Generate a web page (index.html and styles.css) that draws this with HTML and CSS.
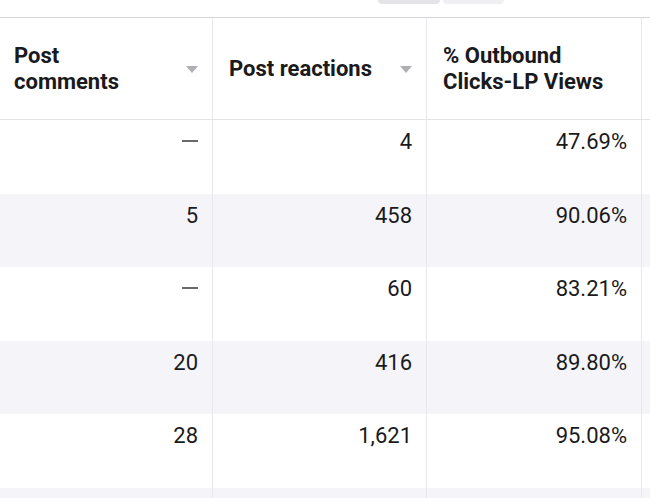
FILE: index.html
```html
<!DOCTYPE html>
<html>
<head>
<meta charset="utf-8">
<link rel="stylesheet" href="styles.css">
</head>
<body>
<div class="topbar">
  <div class="tabs">
    <span class="tab tab-a"></span>
    <span class="tab tab-b"></span>
  </div>
</div>
<div class="table">
  <div class="row head">
    <div class="cell"><span class="htext">Post<br>comments</span><span class="caret"></span></div>
    <div class="cell"><span class="htext">Post reactions</span><span class="caret"></span></div>
    <div class="cell"><span class="htext">% Outbound<br>Clicks-LP Views</span></div>
    <div class="cell last"></div>
  </div>
  <div class="row">
    <div class="cell num"><span class="dash"></span></div>
    <div class="cell num">4</div>
    <div class="cell num">47.69%</div>
    <div class="cell last"></div>
  </div>
  <div class="row alt">
    <div class="cell num">5</div>
    <div class="cell num">458</div>
    <div class="cell num">90.06%</div>
    <div class="cell last"></div>
  </div>
  <div class="row">
    <div class="cell num"><span class="dash"></span></div>
    <div class="cell num">60</div>
    <div class="cell num">83.21%</div>
    <div class="cell last"></div>
  </div>
  <div class="row alt">
    <div class="cell num">20</div>
    <div class="cell num">416</div>
    <div class="cell num">89.80%</div>
    <div class="cell last"></div>
  </div>
  <div class="row">
    <div class="cell num">28</div>
    <div class="cell num">1,621</div>
    <div class="cell num">95.08%</div>
    <div class="cell last"></div>
  </div>
  <div class="row alt short">
    <div class="cell num"></div>
    <div class="cell num"></div>
    <div class="cell num"></div>
    <div class="cell last"></div>
  </div>
</div>
</body>
</html>
```

FILE: styles.css
```css
* { box-sizing: border-box; }
html, body { margin: 0; padding: 0; background: #fff; overflow: hidden; }
body {
  width: 650px;
  height: 498px;
  font-family: Roboto, "Liberation Sans", sans-serif;
  color: #1a1a1c;
}
.topbar {
  height: 18px;
  border-bottom: 1px solid #d4d4d6;
  display: flex;
  align-items: flex-start;
}
.tabs {
  display: flex;
  gap: 3px;
  margin-left: 378px;
}
.tab {
  display: block;
  width: 62px;
  height: 4px;
  border-radius: 0 0 4px 4px;
}
.tab-a { background: #e4e4e8; }
.tab-b { background: #f0f0f3; width: 61px; }
.row {
  display: grid;
  grid-template-columns: 213px 214px 215px 1fr;
  height: 73.6px;
  background: #fff;
}
.row.alt { background: #f5f5f9; }
.row.short { height: 10px; }
.row.head {
  height: 102px;
  border-bottom: 1px solid #e3e3e6;
}
.cell {
  border-right: 1px solid #e8e8ec;
}
.cell.last { border-right: none; }
.head .cell {
  display: flex;
  align-items: center;
  justify-content: space-between;
  padding: 0 14px 0 14px;
}
.head .cell:nth-child(2), .head .cell:nth-child(3) { padding-left: 16px; }
.htext {
  font-weight: 700;
  font-size: 22px;
  line-height: 26px;
  letter-spacing: 0;
}
.caret {
  width: 0;
  height: 0;
  border-left: 6px solid transparent;
  border-right: 6px solid transparent;
  border-top: 7px solid #b0b0b4;
  margin-top: 2px;
}
.num {
  text-align: right;
  padding: 9px 14px 0 0;
  font-size: 22px;
  line-height: 26px;
}
.dash {
  display: inline-block;
  width: 16px;
  height: 2px;
  background: #6a6a6e;
  vertical-align: middle;
  margin-bottom: 5px;
}
```
